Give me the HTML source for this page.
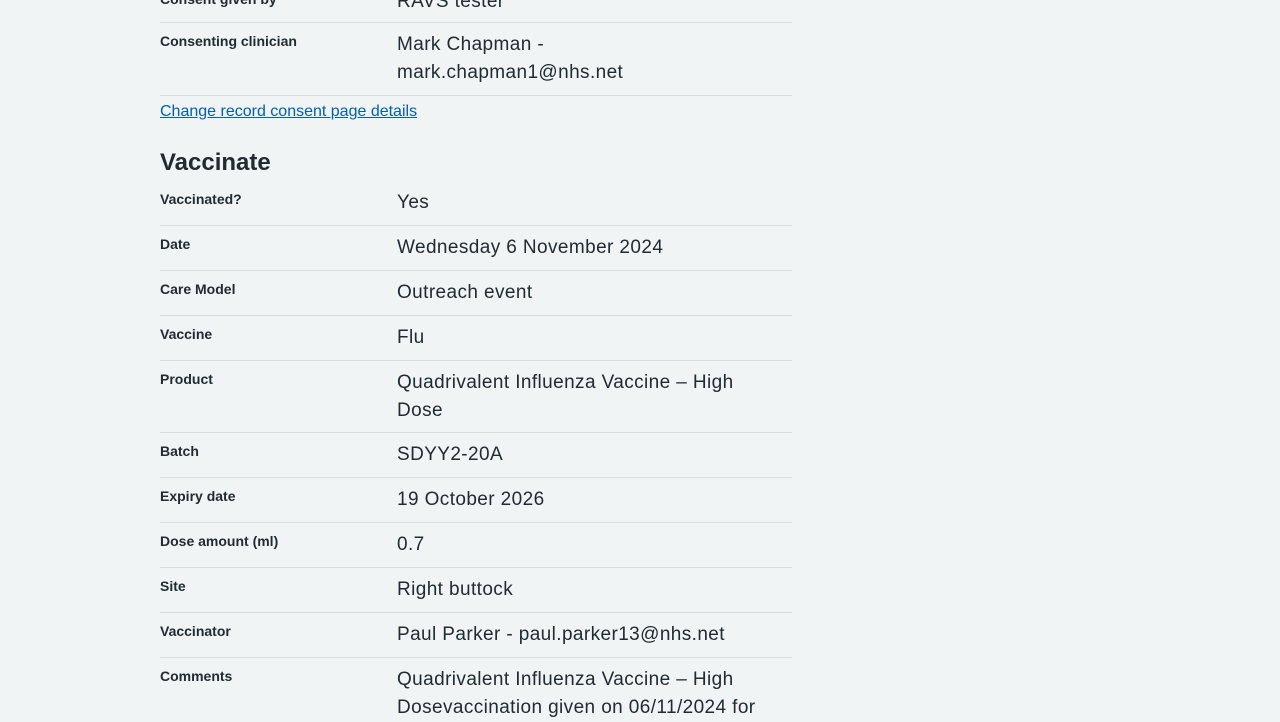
<!DOCTYPE html>
<html><head><style>
body{margin:0;width:1280px;height:720px;background:#f0f4f5;overflow:hidden;font-family:"Liberation Sans",sans-serif;color:#212b32;position:relative}
.l{position:absolute;left:160px;font-size:14px;font-weight:bold;line-height:18px}
.v{position:absolute;left:397px;width:390px;font-size:19px;line-height:28px;letter-spacing:0.4px;margin-top:2px}
.h{position:absolute;left:160px;width:632px;height:1px;background:#d8dde0}
a{position:absolute;left:160px;top:102px;font-size:16px;line-height:20px;color:#005eb8;text-decoration:underline}
h2{position:absolute;left:160px;top:147px;margin:0;font-size:24px;line-height:32px;font-weight:bold}
</style></head><body>
<div class="l" style="top:-10px">Consent given by</div><div class="v" style="top:-14px">RAVS tester</div>
<div class="h" style="top:22px"></div>
<div class="l" style="top:32px">Consenting clinician</div><div class="v" style="top:29px">Mark Chapman -<br>mark.chapman1@nhs.net</div>
<div class="h" style="top:95px"></div>
<a>Change record consent page details</a>
<h2>Vaccinate</h2>
<div class="l" style="top:190px">Vaccinated?</div><div class="v" style="top:187px">Yes</div>
<div class="h" style="top:225px"></div>
<div class="l" style="top:235px">Date</div><div class="v" style="top:232px">Wednesday 6 November 2024</div>
<div class="h" style="top:270px"></div>
<div class="l" style="top:280px">Care Model</div><div class="v" style="top:277px">Outreach event</div>
<div class="h" style="top:315px"></div>
<div class="l" style="top:325px">Vaccine</div><div class="v" style="top:322px">Flu</div>
<div class="h" style="top:360px"></div>
<div class="l" style="top:370px">Product</div><div class="v" style="top:367px">Quadrivalent Influenza Vaccine – High<br>Dose</div>
<div class="h" style="top:432px"></div>
<div class="l" style="top:442px">Batch</div><div class="v" style="top:439px">SDYY2-20A</div>
<div class="h" style="top:477px"></div>
<div class="l" style="top:487px">Expiry date</div><div class="v" style="top:484px">19 October 2026</div>
<div class="h" style="top:522px"></div>
<div class="l" style="top:532px">Dose amount (ml)</div><div class="v" style="top:529px">0.7</div>
<div class="h" style="top:567px"></div>
<div class="l" style="top:577px">Site</div><div class="v" style="top:574px">Right buttock</div>
<div class="h" style="top:612px"></div>
<div class="l" style="top:622px">Vaccinator</div><div class="v" style="top:619px">Paul Parker - paul.parker13@nhs.net</div>
<div class="h" style="top:657px"></div>
<div class="l" style="top:667px">Comments</div><div class="v" style="top:664px">Quadrivalent Influenza Vaccine – High<br>Dosevaccination given on 06/11/2024 for</div>
</body></html>
